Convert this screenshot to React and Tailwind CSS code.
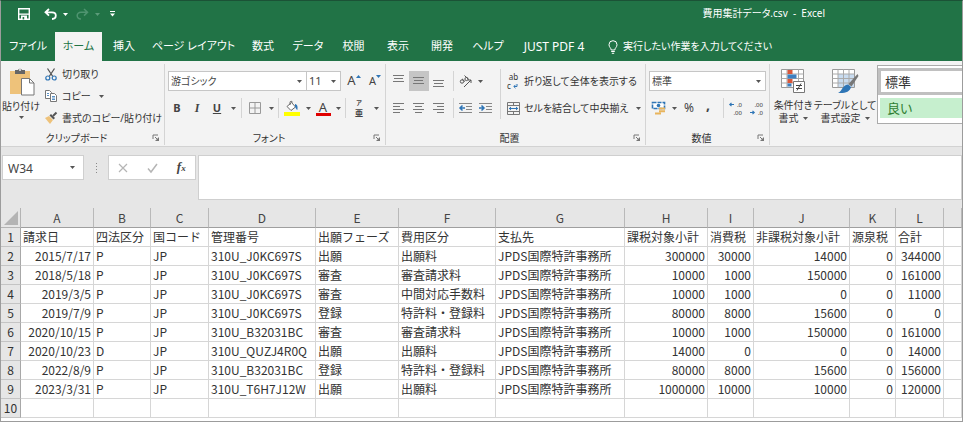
import clsx from "clsx";

const tabs = [
    { label: "ファイル", width: "w-[54px]" },
    { label: "ホーム", width: "w-[47px]", active: true },
    { label: "挿入", width: "w-[44px]" },
    { label: "ページ レイアウト", width: "w-[95px]" },
    { label: "数式", width: "w-[44px]" },
    { label: "データ", width: "w-[46px]" },
    { label: "校閲", width: "w-[45px]" },
    { label: "表示", width: "w-[44px]" },
    { label: "開発", width: "w-[44px]" },
    { label: "ヘルプ", width: "w-[48px]" },
    { label: "JUST PDF 4", width: "w-[84px]", latin: true },
]

const columns = [
    { name: "A", width: "w-[73px]", right: true },
    { name: "B", width: "w-[57px]" },
    { name: "C", width: "w-[58px]" },
    { name: "D", width: "w-[107px]" },
    { name: "E", width: "w-[83px]" },
    { name: "F", width: "w-[97px]" },
    { name: "G", width: "w-[129px]" },
    { name: "H", width: "w-[83px]", right: true },
    { name: "I", width: "w-[46px]", right: true },
    { name: "J", width: "w-[96px]", right: true },
    { name: "K", width: "w-[46px]", right: true },
    { name: "L", width: "w-[48px]", right: true },
    { name: "", width: "w-auto" },
]

const office = "JPDS国際特許事務所"

const rows = [
    ["請求日", "四法区分", "国コード", "管理番号", "出願フェーズ", "費用区分", "支払先", "課税対象小計", "消費税", "非課税対象小計", "源泉税", "合計"],
    ["2015/7/17", "P", "JP", "310U_J0KC697S", "出願", "出願料", office, 300000, 30000, 14000, 0, 344000],
    ["2018/5/18", "P", "JP", "310U_J0KC697S", "審査", "審査請求料", office, 10000, 1000, 150000, 0, 161000],
    ["2019/3/5", "P", "JP", "310U_J0KC697S", "審査", "中間対応手数料", office, 10000, 1000, 0, 0, 11000],
    ["2019/7/9", "P", "JP", "310U_J0KC697S", "登録", "特許料・登録料", office, 80000, 8000, 15600, 0, 0],
    ["2020/10/15", "P", "JP", "310U_B32031BC", "審査", "審査請求料", office, 10000, 1000, 150000, 0, 161000],
    ["2020/10/23", "D", "JP", "310U_QUZJ4R0Q", "出願", "出願料", office, 14000, 0, 0, 0, 14000],
    ["2022/8/9", "P", "JP", "310U_B32031BC", "登録", "特許料・登録料", office, 80000, 8000, 15600, 0, 156000],
    ["2023/3/31", "P", "JP", "310U_T6H7J12W", "出願", "出願料", office, 1000000, 10000, 10000, 0, 120000],
    [],
]

function Caret({ className = "text-[#555]" }) {
    return (
        <svg viewBox="0 0 5 3" className={clsx("w-[5px] h-[3px] shrink-0", className)} fill="currentColor">
            <path d="M0 0h5L2.5 3z" />
        </svg>
    )
}

function Icon({ w = 14, h = 14, children }) {
    return (
        <svg width={w} height={h} viewBox={`0 0 ${w} ${h}`} fill="none" className="shrink-0 overflow-visible">
            {children}
        </svg>
    )
}

function ToolButton({ label, className = "w-5", children }) {
    return (
        <button aria-label={label} className={clsx("h-5 flex items-center justify-center shrink-0", className)}>
            {children}
        </button>
    )
}

function Divider() {
    return <div className="w-px h-5 bg-[#d4d4d4] shrink-0" />
}

function Group({ title, width, children }) {
    return (
        <section className={clsx("flex flex-col shrink-0 mt-[3px] mb-px border-r border-[#d4d4d4]", width)}>
            <div className="flex-1 min-h-0 pt-[7px]">{children}</div>
            <div className="flex items-center h-[14px] pr-[4px] leading-[14px]">
                <span className="flex-1 text-center">{title}</span>
                <button aria-label={`${title}の設定`}>
                    <Icon w={8} h={8}>
                        <path d="M1 5V1h5" stroke="#777" />
                        <path d="M3 3l3 3" stroke="#777" />
                        <path d="M7 3v4H3z" fill="#777" />
                    </Icon>
                </button>
            </div>
        </section>
    )
}

function Picker({ label, value, width }) {
    return (
        <div className={clsx("flex items-center h-5 pr-1 bg-white border border-[#c6c6c6]", width)}>
            <select aria-label={label} className="appearance-none flex-1 min-w-0 pl-[2px] bg-transparent outline-none">
                <option>{value}</option>
            </select>
            <Caret />
        </div>
    )
}

// text lines, given as [x, width] pairs
function Lines({ lines, top = 2, gap = 3 }) {
    return (
        <Icon w={12} h={14}>
            {lines.map(([x, width], i) => (
                <rect key={i} x={x} y={top + i * gap} width={width} height="1" fill="#777" />
            ))}
        </Icon>
    )
}

function TitleBar() {
    return (
        <div className="flex items-start h-[31px] text-white">
            <div className="flex items-center h-[26px] pl-[17px]">
                <button aria-label="上書き保存">
                    <Icon w={12} h={12}>
                        <path d="M.7.7h10.6v10.6H.7z" stroke="#fff" strokeWidth="1.4" />
                        <path d="M1 5.5h10v1.3H1z" fill="#fff" />
                        <path d="M3 7.5h6V12H3z" fill="#fff" />
                        <path d="M4.6 9h1.6v2.4H4.6z" fill="#217346" />
                    </Icon>
                </button>
                <button aria-label="元に戻す" className="ml-[14px]">
                    <Icon w={13} h={12}>
                        <path d="M5 1L1.5 4.3 5 7.6M1.8 4.3H8c2.4 0 3.8 1.5 3.8 3.3S10.3 11 8 11" stroke="#fff" strokeWidth="1.8" />
                    </Icon>
                </button>
                <button aria-label="元に戻す履歴" className="ml-[6px]"><Caret className="text-white" /></button>
                <button aria-label="やり直し" className="ml-[8px]">
                    <Icon w={13} h={12}>
                        <path d="M8 1l3.5 3.3L8 7.6M11.2 4.3H5C2.6 4.3 1.2 5.8 1.2 7.6S2.7 11 5 11" stroke="#4f9470" strokeWidth="1.5" />
                    </Icon>
                </button>
                <button aria-label="やり直し履歴" className="ml-[6px]"><Caret className="text-[#5c9c7a]" /></button>
                <button aria-label="クイック アクセスのカスタマイズ" className="ml-[10px]">
                    <Icon w={5} h={6}>
                        <path d="M0 0h5v1H0zM0 2.5h5L2.5 5.5z" fill="#fff" />
                    </Icon>
                </button>
            </div>
            <h1 className="ml-auto mr-[137px] mt-[3px] leading-[18px] whitespace-pre">費用集計データ.csv  -  Excel</h1>
        </div>
    )
}

function TabBar() {
    return (
        <nav className="flex h-[29px] text-white">
            {tabs.map((tab) => (
                <button
                    key={tab.label}
                    className={clsx(
                        "shrink-0 whitespace-nowrap",
                        tab.latin ? "text-[12px]" : "text-[11px]",
                        tab.width,
                        tab.active && "bg-[#f3f3f3] text-[#217346]"
                    )}
                >
                    {tab.label}
                </button>
            ))}
            <button className="flex items-center gap-[5px] ml-[12px] whitespace-nowrap">
                <Icon w={10} h={14}>
                    <path d="M3.2 10C3.2 8 1 7.3 1 4.7a4 4 0 0 1 8 0C9 7.3 6.8 8 6.8 10z" stroke="#fff" />
                    <path d="M3.2 11.5h3.6M3.8 13.3h2.4" stroke="#fff" />
                </Icon>
                実行したい作業を入力してください
            </button>
        </nav>
    )
}

function ClipboardGroup() {
    return (
        <Group title="クリップボード" width="w-[164px]">
            <div className="flex items-start -mt-[7px]">
                <button className="flex flex-col items-center w-[40px] shrink-0 pt-[3px] whitespace-nowrap">
                    <Icon w={26} h={29}>
                        <path d="M2 4h20v23H2z" fill="#eec27a" />
                        <path d="M7 3h3a2.2 2.2 0 0 1 4 0h3v4H7z" fill="#666" />
                        <circle cx="12" cy="3" r="1" fill="#f3f3f3" />
                        <path d="M13.5 11.5h8l4.5 4.5v12H13.5z" fill="#fff" stroke="#777" />
                        <path d="M21.5 11.5V16H26" stroke="#777" />
                    </Icon>
                    <span className="leading-[16px] mt-[2px]">貼り付け</span>
                    <Caret className="mt-[2px] text-[#555]" />
                </button>
                <div className="flex flex-col items-start gap-[2px] pl-[4px] whitespace-nowrap">
                    <button className="flex items-center gap-[5px] h-5">
                        <Icon w={12} h={13}>
                            <path d="M2.5.5l5.3 8M9.5.5l-5.3 8" stroke="#555" strokeWidth="1.3" />
                            <circle cx="2.8" cy="10" r="2" stroke="#2e75b6" strokeWidth="1.2" />
                            <circle cx="9.2" cy="10" r="2" stroke="#2e75b6" strokeWidth="1.2" />
                        </Icon>
                        切り取り
                    </button>
                    <button className="flex items-center gap-[5px] h-5">
                        <Icon w={12} h={12}>
                            <path d="M.5.5h4l2 2v6h-6z" fill="#fff" stroke="#777" />
                            <path d="M5.5 3.5h4l2 2v6h-6z" fill="#fff" stroke="#777" />
                            <path d="M2 3.5h2M2 5.5h2M7 6.5h3M7 8h3M7 9.5h3" stroke="#2e75b6" strokeWidth=".8" />
                        </Icon>
                        コピー
                        <Caret className="ml-[3px] text-[#555]" />
                    </button>
                    <button className="flex items-center gap-[5px] h-5">
                        <Icon w={12} h={12}>
                            <path d="M0 6l4-2 4 4-3 4z" fill="#eec27a" />
                            <path d="M4.500 3.500L6 2l4 4-1.500 1.500z" fill="#555" />
                            <path d="M8 4l3.500-3.500" stroke="#555" strokeWidth="2" />
                        </Icon>
                        書式のコピー/貼り付け
                    </button>
                </div>
            </div>
        </Group>
    )
}

function FontGroup() {
    return (
        <Group title="フォント" width="w-[221px]">
            <div className="flex flex-col gap-[7px] pl-[3px] text-[#444]">
                <div className="flex items-center">
                    <Picker label="フォント名" value="游ゴシック" width="w-[139px]" />
                    <Picker label="フォント サイズ" value="11" width="w-[35px] -ml-px text-[11px]" />
                    <ToolButton label="拡大" className="w-[22px] ml-[2px]">
                        <span className="text-[13px]">A</span>
                        <svg viewBox="0 0 5 3" className="w-[5px] h-[3px] mb-[10px]" fill="#2e75b6"><path d="M0 3h5L2.5 0z" /></svg>
                    </ToolButton>
                    <ToolButton label="縮小" className="w-[20px]">
                        <span className="text-[11px]">A</span>
                        <Caret className="mb-[10px] text-[#2e75b6]" />
                    </ToolButton>
                </div>
                <div className="flex items-center text-[11px]">
                    <ToolButton label="太字" className="w-[18px] font-bold">B</ToolButton>
                    <ToolButton label="斜体" className="w-[22px] font-bold italic font-['Liberation_Serif',serif] text-[12px]">I</ToolButton>
                    <ToolButton label="下線" className="w-[18px] font-bold underline">U</ToolButton>
                    <ToolButton label="下線の種類" className="w-[15px]"><Caret /></ToolButton>
                    <Divider />
                    <ToolButton label="罫線" className="w-[25px]">
                        <Icon w={12} h={12}>
                            <path d="M.5.5h11v11H.5zM6 .5v11M.5 6h11" stroke="#999" />
                        </Icon>
                    </ToolButton>
                    <ToolButton label="罫線の種類" className="w-[8px]"><Caret /></ToolButton>
                    <div className="w-[3px]" />
                    <Divider />
                    <ToolButton label="塗りつぶしの色" className="w-[25px]">
                        <Icon w={16} h={15}>
                            <path d="M3 5.5L7.5 1.5l4 4.5L7 9.5z" fill="#fff" stroke="#666" />
                            <path d="M6 4V1.5a1.2 1.2 0 0 1 2.4 0" stroke="#666" />
                            <path d="M11 3c2.5.5 3 3 2.3 6-1-.5-1.3-2-2.3-3z" fill="#2e75b6" />
                            <path d="M0 11h16v4H0z" fill="#ffff00" />
                        </Icon>
                    </ToolButton>
                    <ToolButton label="塗りつぶしの色の選択" className="w-[8px]"><Caret /></ToolButton>
                    <ToolButton label="フォントの色" className="w-[22px]">
                        <span className="flex flex-col items-center w-[15px] border-b-3 border-[#e00000] leading-[12px] text-[13px]">A</span>
                    </ToolButton>
                    <ToolButton label="フォントの色の選択" className="w-[8px]"><Caret /></ToolButton>
                    <div className="w-[3px]" />
                    <Divider />
                    <ToolButton label="ふりがな" className="w-[26px]">
                        <span className="flex flex-col items-center font-bold">
                            <span className="text-[6px] leading-[9px]">ア</span>
                            <span className="text-[8px] leading-[10px]">亜</span>
                        </span>
                    </ToolButton>
                    <ToolButton label="ふりがなの設定" className="w-[8px]"><Caret /></ToolButton>
                </div>
            </div>
        </Group>
    )
}

function AlignmentGroup() {
    const even = [[0, 11], [1, 9], [0, 11]]
    return (
        <Group title="配置" width="w-[260px]">
            <div className="flex pl-[3px]">
                <div className="flex flex-col gap-[7px]">
                    <div className="flex items-center">
                        <ToolButton label="上揃え"><Lines lines={even} top={1} /></ToolButton>
                        <ToolButton label="上下中央揃え" className="w-5 bg-[#c5c5c5]"><Lines lines={even} top={3} /></ToolButton>
                        <ToolButton label="下揃え"><Lines lines={even} top={6} /></ToolButton>
                        <div className="w-[4px]" />
                        <Divider />
                        <ToolButton label="方向" className="w-[23px]">
                            <Icon w={14} h={14}>
                                <path d="M5 13l7-7M9 6h3v3" stroke="#555" />
                                <circle cx="3" cy="7.500" r="1.700" stroke="#555" />
                                <path d="M3 4.800l3 2.800M5.500 1.500l4 4" stroke="#555" />
                                <circle cx="7.500" cy="5" r="1.600" stroke="#555" />
                            </Icon>
                        </ToolButton>
                        <ToolButton label="方向の設定" className="w-[6px]"><Caret /></ToolButton>
                    </div>
                    <div className="flex items-center">
                        <ToolButton label="左揃え"><Lines lines={[[0, 11], [0, 7], [0, 11], [0, 7]]} /></ToolButton>
                        <ToolButton label="中央揃え"><Lines lines={[[0, 11], [2, 7], [0, 11], [2, 7]]} /></ToolButton>
                        <ToolButton label="右揃え"><Lines lines={[[0, 11], [4, 7], [0, 11], [4, 7]]} /></ToolButton>
                        <div className="w-[4px]" />
                        <Divider />
                        <ToolButton label="インデントを減らす" className="w-[23px]">
                            <Icon w={13} h={12}>
                                <path d="M0 1.500h13M7 4.500h6M7 7.500h6M0 10.500h13" stroke="#888" />
                                <path d="M6 6H1M3.500 3.500L1 6l2.500 2.500" stroke="#2e75b6" strokeWidth="1.500" />
                            </Icon>
                        </ToolButton>
                        <ToolButton label="インデントを増やす" className="w-[17px]">
                            <Icon w={13} h={12}>
                                <path d="M0 1.500h13M7 4.500h6M7 7.500h6M0 10.500h13" stroke="#888" />
                                <path d="M0 6h5M2.500 3.500L5 6 2.500 8.500" stroke="#2e75b6" strokeWidth="1.500" />
                            </Icon>
                        </ToolButton>
                    </div>
                </div>
                <div className="w-px h-[50px] -mt-[2px] ml-[6px] mr-[6px] bg-[#d4d4d4]" />
                <div className="flex flex-col gap-[7px] whitespace-nowrap">
                    <button className="flex items-center gap-[4px] h-5">
                        <span className="flex flex-col w-[13px] text-[8px]">
                            <span className="leading-[10px]">ab</span>
                            <span className="flex items-center gap-[2px] leading-[8px]">
                                c
                                <Icon w={5} h={5}>
                                    <path d="M4 0v2.500H1M2.500.8L.8 2.500l1.700 1.700" stroke="#2e75b6" />
                                </Icon>
                            </span>
                        </span>
                        折り返して全体を表示する
                    </button>
                    <button className="flex items-center gap-[4px] h-5">
                        <Icon w={13} h={13}>
                            <path d="M.5.5h12v12H.5zM.5 3.500h12M.5 9.500h12M6.500.5v3M6.500 9.500v3" stroke="#777" />
                            <path d="M2 6.500h9M4 5L2.300 6.500 4 8M9 5l1.700 1.500L9 8" stroke="#2e75b6" />
                        </Icon>
                        セルを結合して中央揃え
                        <Caret className="ml-[3px] text-[#555]" />
                    </button>
                </div>
            </div>
        </Group>
    )
}

function DecimalIcon({ top, bottom, children }) {
    return (
        <Icon w={13} h={14}>
            <text x="13" y="6" fontSize="6" textAnchor="end" fill="#333">{top}</text>
            <text x="13" y="14" fontSize="6" textAnchor="end" fill="#333">{bottom}</text>
            {children}
        </Icon>
    )
}

function NumberGroup() {
    return (
        <Group title="数値" width="w-[124px]">
            <div className="flex flex-col gap-[7px] px-[3px] text-[#444]">
                <Picker label="表示形式" value="標準" width="w-full" />
                <div className="flex items-center">
                    <ToolButton label="通貨表示形式">
                        <Icon w={14} h={14}>
                            <path d="M.5 1.500h12v6H.5z" fill="#fff" stroke="#2e75b6" strokeWidth="1.600" strokeDasharray="4 1" />
                            <circle cx="6.500" cy="4.500" r="1.800" fill="#2e75b6" />
                            <path d="M7 6.500h6v2H7zM7 9.200h6v2H7zM3 11.500h6v2H3z" fill="#e8b45c" />
                        </Icon>
                    </ToolButton>
                    <ToolButton label="通貨の選択" className="w-[10px]"><Caret /></ToolButton>
                    <ToolButton label="パーセント" className="w-[20px] text-[12px]">%</ToolButton>
                    <ToolButton label="桁区切り" className="w-[18px] pb-[8px] text-[14px] font-bold">,</ToolButton>
                    <div className="w-[6px]" />
                    <Divider />
                    <ToolButton label="小数点以下の表示桁数を増やす" className="w-[22px]">
                        <DecimalIcon top=".0" bottom=".00">
                            <path d="M5 3.500H.8M2.500 1.800L.8 3.500l1.700 1.700" stroke="#2e75b6" strokeWidth="1.200" />
                        </DecimalIcon>
                    </ToolButton>
                    <ToolButton label="小数点以下の表示桁数を減らす" className="w-[20px]">
                        <DecimalIcon top=".00" bottom=".0">
                            <path d="M0 11.500h4.200M2.500 9.800l1.700 1.700-1.700 1.700" stroke="#2e75b6" strokeWidth="1.200" />
                        </DecimalIcon>
                    </ToolButton>
                </div>
            </div>
        </Group>
    )
}

function StylesGroup() {
    return (
        <section className="flex flex-1 min-w-0 pt-[4px]">
            <button className="flex flex-col items-center w-[46px] shrink-0 pt-[3px] leading-[13px] whitespace-nowrap">
                <Icon w={25} h={26}>
                    <path d="M.5 1.500h22v18H.5z" fill="#fff" stroke="#999" />
                    <path d="M6 1.500v18M17.500 1.500v18M.5 6h22M.5 10.500h22M.5 15h22" stroke="#aaa" />
                    <path d="M6.500 2h5v4h-5zM6.500 11h5v4h-5z" fill="#d9583b" />
                    <path d="M6.500 6.500h9v4h-9zM6.500 15.500h4v3h-4z" fill="#3d7fc0" />
                    <path d="M12.500 13.500h11v11h-11z" fill="#fff" stroke="#777" />
                    <path d="M15 17.500h6M15 20.500h6M20 15.500l-4 7" stroke="#444" />
                </Icon>
                <span className="mt-[5px]">条件付き</span>
                <span className="flex items-center gap-[4px]">書式 <Caret /></span>
            </button>
            <button className="flex flex-col items-center w-[58px] shrink-0 pt-[3px] leading-[13px] whitespace-nowrap">
                <Icon w={28} h={26}>
                    <path d="M1.500 1.500h22v18h-22z" fill="#fff" stroke="#999" />
                    <path d="M7 6h16v13H7z" fill="#c9dcf0" />
                    <path d="M7 1.500v18M12.500 1.500v18M18 1.500v18M1.500 6h22M1.500 10.500h22M1.500 15h22" stroke="#aaa" />
                    <path d="M26.500 6l-9 10 3 2.500 7-10.500z" fill="#777" />
                    <path d="M17 16.500l3 2.500c-1 5-6 6.500-13 6 4-1.500 4-7.500 10-8.500z" fill="#2e75b6" />
                </Icon>
                <span className="mt-[5px]">テーブルとして</span>
                <span className="flex items-center gap-[4px]">書式設定 <Caret /></span>
            </button>
            <div className="flex-1 min-w-0 h-[59px] ml-[3px] pt-[2px] border border-r-0 border-[#ababab] bg-white text-[13px] text-[#333]">
                <button className="block w-full h-[27px] pl-[4px] border-3 border-r-0 border-[#c0c0c0] text-left leading-[18px]">標準</button>
                <button className="block w-full h-[20px] mt-[3px] pl-[7px] border-l-2 border-white bg-[#c6efce] text-left leading-[18px] text-[#2f7d32]">良い</button>
            </div>
        </section>
    )
}

function FormulaBar() {
    return (
        <div className="flex items-start h-[61px] pt-2 pl-px bg-[#e6e6e6]">
            <div className="flex items-center w-[82px] h-[25px] pr-[8px] bg-white border border-[#cfcfcf]">
                <input aria-label="名前ボックス" defaultValue="W34" className="flex-1 min-w-0 pl-[5px] pt-[2px] text-[12px] text-[#444] outline-none" />
                <Caret />
            </div>
            <div className="flex flex-col gap-[2px] w-[24px] pt-[8px] items-center">
                <i className="w-px h-px bg-[#888]" />
                <i className="w-px h-px bg-[#888]" />
                <i className="w-px h-px bg-[#888]" />
                <i className="w-px h-px bg-[#888]" />
            </div>
            <div className="flex items-center justify-around w-[88px] h-[25px] bg-white border border-[#cfcfcf]">
                <button aria-label="キャンセル">
                    <Icon w={10} h={10}><path d="M1 1l8 8M9 1L1 9" stroke="#b5b5b5" strokeWidth="1.200" /></Icon>
                </button>
                <button aria-label="入力">
                    <Icon w={11} h={10}><path d="M1 5.500L4 9l6-8" stroke="#b5b5b5" strokeWidth="1.500" /></Icon>
                </button>
                <button aria-label="関数の挿入" className="font-['Liberation_Serif',serif] italic font-bold text-[13px] leading-[16px] text-[#444]">
                    f<span className="text-[9px]">x</span>
                </button>
            </div>
            <textarea aria-label="数式バー" className="flex-1 h-[45px] ml-[2px] bg-white border border-[#cfcfcf] resize-none outline-none" />
        </div>
    )
}

function Sheet() {
    return (
        <table className="w-full table-fixed border-separate border-spacing-0 text-[12px] leading-[18px] text-[#333] font-['Noto_Sans_CJK_JP',sans-serif] [font-feature-settings:normal]">
            <thead>
                <tr className="h-5 bg-[#e6e6e6]">
                    <th className="w-[20px] p-0 border-r border-b border-[#b4b4b4]">
                        <svg viewBox="0 0 14 14" className="w-[14px] h-[14px] ml-[3px]" fill="#b4b4b4"><path d="M14 0v14H0z" /></svg>
                    </th>
                    {columns.map((col, i) => (
                        <th key={i} scope="col" className={clsx("p-0 border-r border-b border-r-[#b9b9b9] border-b-[#9f9f9f] font-normal text-[#444]", col.width)}>
                            {col.name}
                        </th>
                    ))}
                </tr>
            </thead>
            <tbody>
                {rows.map((row, i) => (
                    <tr key={i} className="h-[19px]">
                        <th scope="row" className="p-0 border-r border-b border-r-[#a8a8a8] border-b-[#c4c4c4] bg-[#e6e6e6] font-normal">{i + 1}</th>
                        {columns.map((col, j) => (
                            <td
                                key={j}
                                className={clsx(
                                    "px-[2px] py-0 border-r border-b border-[#d6d6d6] whitespace-nowrap",
                                    col.right && i > 0 && "text-right"
                                )}
                            >
                                {row[j]}
                            </td>
                        ))}
                    </tr>
                ))}
            </tbody>
        </table>
    )
}

export default function App() {
    return (
        <div
            lang="ja"
            className="flex flex-col min-h-screen overflow-hidden border border-[#9c9c9c] border-t-[#1b5236] bg-white text-[10px] text-[#333] font-['Noto_Sans','Noto_Sans_CJK_JP',sans-serif] [font-feature-settings:'palt']"
        >
            <header className="bg-[#217346]">
                <TitleBar />
                <TabBar />
            </header>
            <div className="flex h-[86px] bg-[#f3f3f3] border-b border-[#d2d2d2]">
                <ClipboardGroup />
                <FontGroup />
                <AlignmentGroup />
                <NumberGroup />
                <StylesGroup />
            </div>
            <FormulaBar />
            <Sheet />
        </div>
    )
}
